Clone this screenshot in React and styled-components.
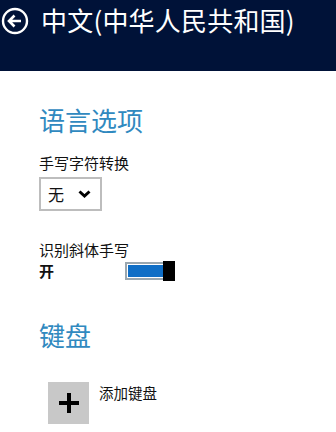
import React from "react";
import styled, { createGlobalStyle } from "styled-components";

const GlobalStyle = createGlobalStyle`
    body {
        margin: 0;
        background: #ffffff;
        font-family: "Noto Sans CJK SC", "Liberation Sans", sans-serif;
        color: #111111;
    }
`;

const Page = styled.div`
    width: 336px;
    height: 432px;
    overflow: hidden;
    background: #ffffff;
`;

const Header = styled.header`
    height: 71px;
    background-color: #001238;
    display: flex;
    align-items: flex-start;
    gap: 12px;
    padding: 6px 0 0 1px;
    box-sizing: border-box;
`;

const BackButton = styled.div`
    width: 28px;
    height: 28px;
    margin-top: 1px;
    display: flex;
    align-items: center;
    justify-content: center;
`;

const Title = styled.h1`
    margin: 0;
    font-size: 26px;
    line-height: 28px;
    font-weight: 400;
    color: #ffffff;
    white-space: nowrap;
    letter-spacing: 0.2px;
`;

const Content = styled.main`
    padding: 34px 0 0 39px;
    display: flex;
    flex-direction: column;
`;

const SectionTitle = styled.h2`
    margin: 0 0 ${props => props.gap}px;
    font-size: 26px;
    line-height: 30px;
    font-weight: 400;
    color: #3089bf;
`;

const Label = styled.div`
    font-size: 15px;
    line-height: 18px;
    font-weight: ${props => (props.bold ? 700 : 400)};
`;

const Select = styled.div`
    margin-top: 5px;
    width: 63px;
    height: 34px;
    box-sizing: border-box;
    border: 2px solid #bdbdbd;
    display: flex;
    align-items: center;
    padding: 0 0 0 7px;
    gap: 14px;
    font-size: 16px;
`;

const Field = styled.div`
    margin-bottom: ${props => props.gap}px;
    display: flex;
    flex-direction: column;
`;

const ToggleRow = styled.div`
    display: flex;
    align-items: center;
    margin-top: 2px;
`;

const ToggleLabel = styled(Label)`
    width: 86px;
`;

const Toggle = styled.div`
    width: 50px;
    height: 20px;
    display: flex;
    align-items: stretch;
`;

const Track = styled.div`
    flex: 1;
    border: 2px solid #9aa7b0;
    border-right: none;
    padding: 1px 0 1px 1px;
    margin: 1px 0;
    display: flex;
`;

const Fill = styled.div`
    flex: 1;
    background: #0f6ec6;
`;

const Thumb = styled.div`
    width: 12px;
    background: #000000;
`;

const AddRow = styled.div`
    display: flex;
    align-items: flex-start;
    gap: 10px;
    margin-left: 9px;
`;

const AddButton = styled.div`
    width: 41px;
    height: 42px;
    background: #c8c8c8;
    display: flex;
    align-items: center;
    justify-content: center;
`;

const AddText = styled.div`
    font-size: 14.5px;
    line-height: 18px;
    margin-top: 2px;
`;

export default () => (
    <Page>
        <GlobalStyle />
        <Header>
            <BackButton>
                <svg width="28" height="28" viewBox="0 0 28 28">
                    <circle cx="14" cy="14" r="12" fill="none" stroke="#fff" strokeWidth="2.4" />
                    <path d="M20 14H8.5M13.5 8.5L8 14l5.5 5.5" fill="none" stroke="#fff" strokeWidth="2.6" />
                </svg>
            </BackButton>
            <Title>中文(中华人民共和国)</Title>
        </Header>
        <Content>
            <SectionTitle gap={19}>语言选项</SectionTitle>
            <Field gap={30}>
                <Label>手写字符转换</Label>
                <Select>
                    <span>无</span>
                    <svg width="13" height="8" viewBox="0 0 13 8">
                        <path d="M1.5 1.5l5 4.5 5-4.5" fill="none" stroke="#000" strokeWidth="3" />
                    </svg>
                </Select>
            </Field>
            <Field gap={39}>
                <Label>识别斜体手写</Label>
                <ToggleRow>
                    <ToggleLabel bold>开</ToggleLabel>
                    <Toggle>
                        <Track>
                            <Fill />
                        </Track>
                        <Thumb />
                    </Toggle>
                </ToggleRow>
            </Field>
            <SectionTitle gap={32}>键盘</SectionTitle>
            <AddRow>
                <AddButton>
                    <svg width="22" height="22" viewBox="0 0 22 22">
                        <path d="M11 1v20M1 11h20" stroke="#000" strokeWidth="4" />
                    </svg>
                </AddButton>
                <AddText>添加键盘</AddText>
            </AddRow>
        </Content>
    </Page>
);
